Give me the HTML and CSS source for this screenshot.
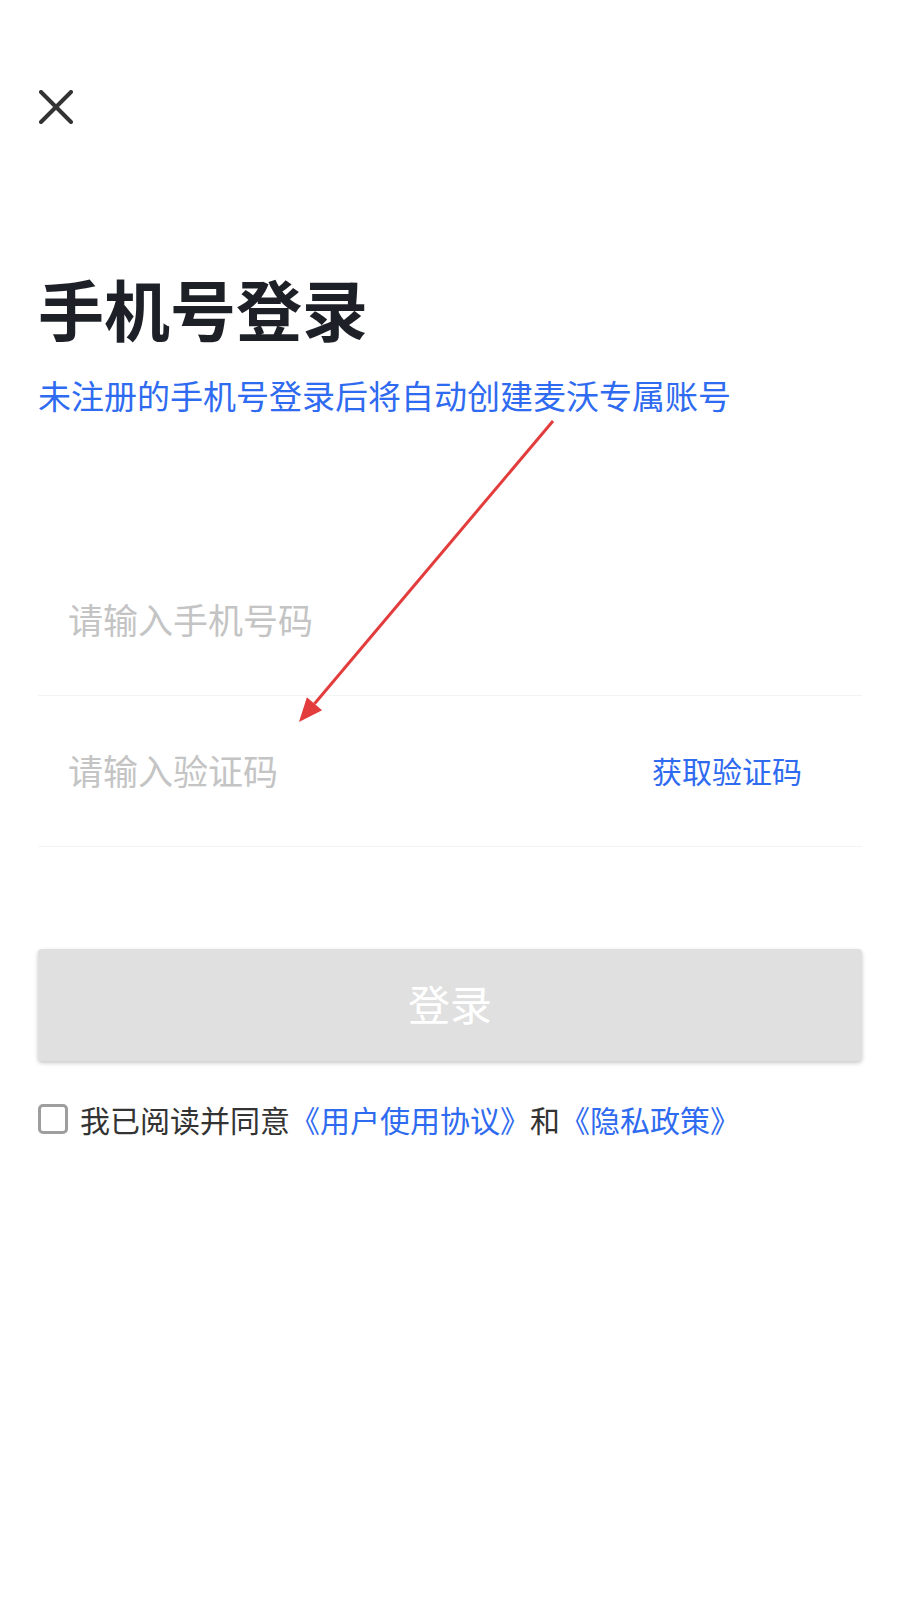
FILE: index.html
```html
<!DOCTYPE html>
<html lang="zh-CN">
<head>
<meta charset="utf-8">
<title>手机号登录</title>
<link rel="stylesheet" href="styles.css">
</head>
<body>
  <div class="page">
    <svg class="close" viewBox="0 0 34 34" aria-label="关闭">
      <path d="M2 2 L32 32 M32 2 L2 32" stroke="#333" stroke-width="4" stroke-linecap="round" fill="none"/>
    </svg>

    <h1 class="title">手机号登录</h1>
    <div class="subtitle">未注册的手机号登录后将自动创建麦沃专属账号</div>

    <div class="form">
      <div class="field">
        <input class="input" type="tel" placeholder="请输入手机号码">
      </div>
      <div class="field">
        <input class="input" type="text" placeholder="请输入验证码">
        <a class="code" href="#">获取验证码</a>
      </div>
    </div>

    <button class="btn" type="button">登录</button>

    <label class="agree">
      <input class="check" type="checkbox">
      <span>我已阅读并同意<a href="#">《用户使用协议》</a>和<a href="#">《隐私政策》</a></span>
    </label>

    <!-- annotation arrow -->
    <svg class="arrow" width="900" height="900" viewBox="0 0 900 900">
      <line x1="553" y1="421" x2="314.5" y2="703.7" stroke="#e33c3c" stroke-width="3"/>
      <polygon points="299,722 322.1,710.2 306.9,697.2" fill="#e33c3c"/>
    </svg>
  </div>
</body>
</html>
```

FILE: styles.css
```css
body { margin: 0; background: #fff; font-family: "Noto Sans CJK SC", "Noto Sans", sans-serif; color: #333; }
.page { position: relative; padding: 90px 38px 0; }
.close { display: block; width: 34px; height: 34px; margin-left: 1px; }

.title { margin: 143px 0 0; font-size: 66px; line-height: 80px; font-weight: 700; color: #1d2127; }
.subtitle { margin-top: 26px; font-size: 33px; line-height: 44px; color: #2f6bf0; }

.form { margin-top: 128px; }
.field { display: flex; align-items: center; height: 150px; border-bottom: 1px solid #f3f3f3;
         padding: 0 60px 3px 30px; box-sizing: border-box; height: 151px; }
.input { flex: 1; min-width: 0; border: 0; outline: 0; padding: 0; background: transparent;
         font-family: inherit; font-size: 35px; line-height: 48px; color: #333; }
.input::placeholder { color: #c4c4c4; }
.code { font-size: 30px; color: #2f6bf0; text-decoration: none; }

.btn { display: block; width: 100%; height: 112px; margin-top: 102px; padding: 0 0 6px; border: 0; border-radius: 4px;
       background: #e0e0e0; color: #fff; font-family: inherit; font-size: 42px;
       box-shadow: 0 2px 4px rgba(0, 0, 0, 0.22); }

.agree { display: flex; align-items: center; gap: 12px; margin-top: 40px; font-size: 30px; line-height: 36px; color: #333; }
.agree a { color: #2f6bf0; text-decoration: none; }
.check { appearance: none; -webkit-appearance: none; width: 30px; height: 30px; margin: 0;
         border: 3px solid #9e9e9e; border-radius: 5px; box-sizing: border-box; }

.arrow { position: absolute; top: 0; left: 0; pointer-events: none; }
```
